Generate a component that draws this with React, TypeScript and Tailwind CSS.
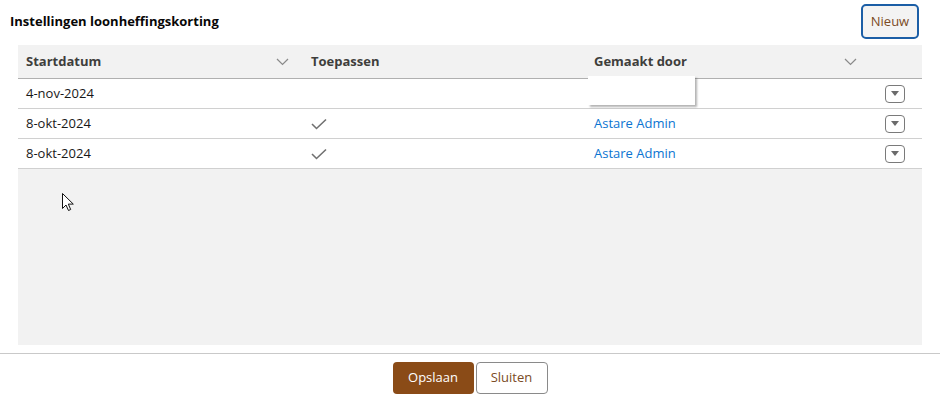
import React from 'react';

const font = { fontFamily: '"Open Sans", "Noto Sans", sans-serif' };

const Chevron = () => (
  <svg width="13" height="8" viewBox="0 0 13 8" className="text-[#8a8a8a]">
    <path d="M1 1l5.5 5.5L12 1" fill="none" stroke="currentColor" strokeWidth="1.2" />
  </svg>
);

const Check = () => (
  <svg width="16" height="12" viewBox="0 0 16 12" className="text-[#707070]">
    <path d="M1 6l4.5 4.5L15 1.5" fill="none" stroke="currentColor" strokeWidth="1.6" />
  </svg>
);

const RowMenu = () => (
  <button className="w-[20px] h-[18px] border border-[#7a7a7a] rounded-[4px] bg-white flex items-center justify-center">
    <svg width="8" height="5" viewBox="0 0 8 5">
      <path d="M0 0h8L4 5z" fill="#6b6b6b" />
    </svg>
  </button>
);

const rows = [
  { date: '4-nov-2024', applied: false, by: '' },
  { date: '8-okt-2024', applied: true, by: 'Astare Admin' },
  { date: '8-okt-2024', applied: true, by: 'Astare Admin' },
];

export default function App() {
  return (
    <div className="relative w-[940px] h-[399px] bg-white text-[13px] text-[#181818]" style={font}>
      {/* title bar */}
      <div className="flex items-center justify-between pl-[10px] pr-[21px] pt-[4px]">
        <h1 className="text-[13px] font-bold text-[#080707]">Instellingen loonheffingskorting</h1>
        <button className="w-[58px] h-[35px] rounded-[5px] border-2 border-[#1b5ea6] bg-[#f3f3f3] text-[13px] text-[#7b4b25]">
          Nieuw
        </button>
      </div>

      {/* table */}
      <div className="mx-[18px] mt-[6px] h-[300px] bg-[#f2f2f2]">
        <div className="grid grid-cols-[285px_283px_280px_54px] h-[34px] border-b border-[#b0b0b0] font-bold text-[#3e3e3c]">
          <div className="flex items-center justify-between pl-[8px] pr-[14px]">
            <span>Startdatum</span>
            <Chevron />
          </div>
          <div className="flex items-center pl-[8px]">Toepassen</div>
          <div className="flex items-center justify-between pl-[8px] pr-[9px]">
            <span>Gemaakt door</span>
            <Chevron />
          </div>
          <div />
        </div>
        {rows.map((r, i) => (
          <div
            key={i}
            className="grid grid-cols-[285px_283px_280px_54px] h-[30px] border-b border-[#d0d0d0] bg-white"
          >
            <div className="flex items-center pl-[8px]">{r.date}</div>
            <div className="flex items-center pl-[8px]">{r.applied && <Check />}</div>
            <div className="flex items-center pl-[8px] text-[#0b74d1]">{r.by}</div>
            <div className="flex items-center pl-[19px]">
              <RowMenu />
            </div>
          </div>
        ))}
      </div>

      {/* leftover popup edge */}
      <div className="absolute left-[588px] top-[76px] w-[107px] h-[29px] bg-white shadow-[2px_2px_2px_rgba(0,0,0,0.3)]" />

      {/* mouse pointer */}
      <svg className="absolute left-[62px] top-[193px]" width="13" height="19" viewBox="0 0 13 19">
        <path
          d="M0.5 0.5v15l3.5-3.5 2.5 5.5 2.2-1-2.4-5.4h5z"
          fill="white"
          stroke="#111"
          strokeWidth="1"
          strokeLinejoin="round"
        />
      </svg>

      {/* footer */}
      <div className="mt-[8px] border-t border-[#c9c9c9] flex justify-center gap-[2px] pt-[8px]">
        <button className="w-[81px] h-[32px] rounded-[4px] bg-[#8a4b17] text-white text-[13px]">Opslaan</button>
        <button className="w-[72px] h-[32px] rounded-[4px] border border-[#8a8a8a] bg-white text-[#7b4b25] text-[13px]">
          Sluiten
        </button>
      </div>
    </div>
  );
}
